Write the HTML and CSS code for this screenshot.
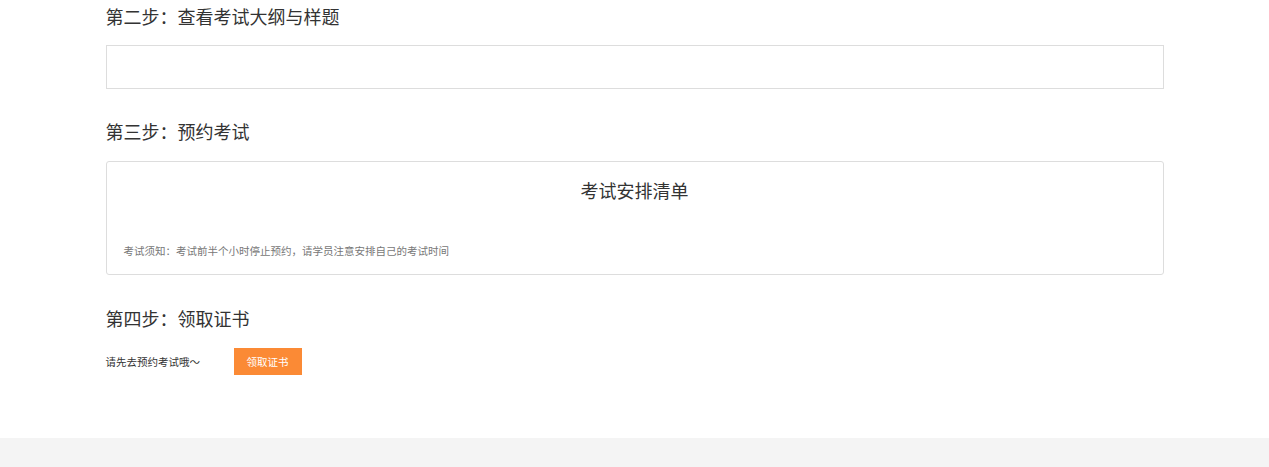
FILE: index.html
```html
<!DOCTYPE html>
<html lang="zh-CN">

<head>
  <meta charset="UTF-8">
  <meta name="viewport" content="width=device-width, initial-scale=1.0">
  <title>考试流程</title>
  <link rel="stylesheet" href="styles.css">
</head>

<body>
  <div class="main">
    <h2 class="step-title">第二步：查看考试大纲与样题</h2>
    <div class="outline-box"></div>

    <h2 class="step-title">第三步：预约考试</h2>
    <div class="exam-box">
      <h3 class="exam-title">考试安排清单</h3>
      <p class="exam-notice">考试须知：考试前半个小时停止预约，请学员注意安排自己的考试时间</p>
    </div>

    <h2 class="step-title">第四步：领取证书</h2>
    <div class="cert-row">
      <span class="cert-tip">请先去预约考试哦～</span>
      <button class="cert-btn">领取证书</button>
    </div>
  </div>

  <div class="footer"></div>
</body>

</html>
```

FILE: styles.css
```css
body {
  font-family: "Noto Sans CJK SC", "Liberation Sans", sans-serif;
  background-color: #ffffff;
  color: #333;
  margin: 0;
  padding: 0;
}

.main {
  width: 1058px;
  margin: 0 auto;
  padding-bottom: 63px;
}

.step-title {
  font-size: 18px;
  font-weight: normal;
  line-height: 32px;
  margin: 0;
  color: #333;
}

.outline-box {
  height: 42px;
  border: 1px solid #ddd;
  margin: 13px 0 26px;
}

.exam-box {
  border: 1px solid #ddd;
  border-radius: 3px;
  padding: 16px 17px 13px;
  margin: 14px 0 27px;
}

.exam-title {
  font-size: 18px;
  font-weight: normal;
  line-height: 24px;
  text-align: center;
  margin: 0 0 39px;
  color: #333;
}

.exam-notice {
  font-size: 10.5px;
  line-height: 20px;
  color: #777;
  margin: 0;
}

.cert-row {
  display: flex;
  align-items: center;
  margin-top: 14px;
}

.cert-tip {
  font-size: 10.5px;
  color: #333;
  width: 128px;
}

.cert-btn {
  font-family: inherit;
  font-size: 10.5px;
  color: #fff;
  background-color: #fb8a35;
  border: none;
  width: 68px;
  height: 27px;
  padding: 0;
}

.footer {
  background-color: #f4f4f4;
  height: 60px;
}
```
